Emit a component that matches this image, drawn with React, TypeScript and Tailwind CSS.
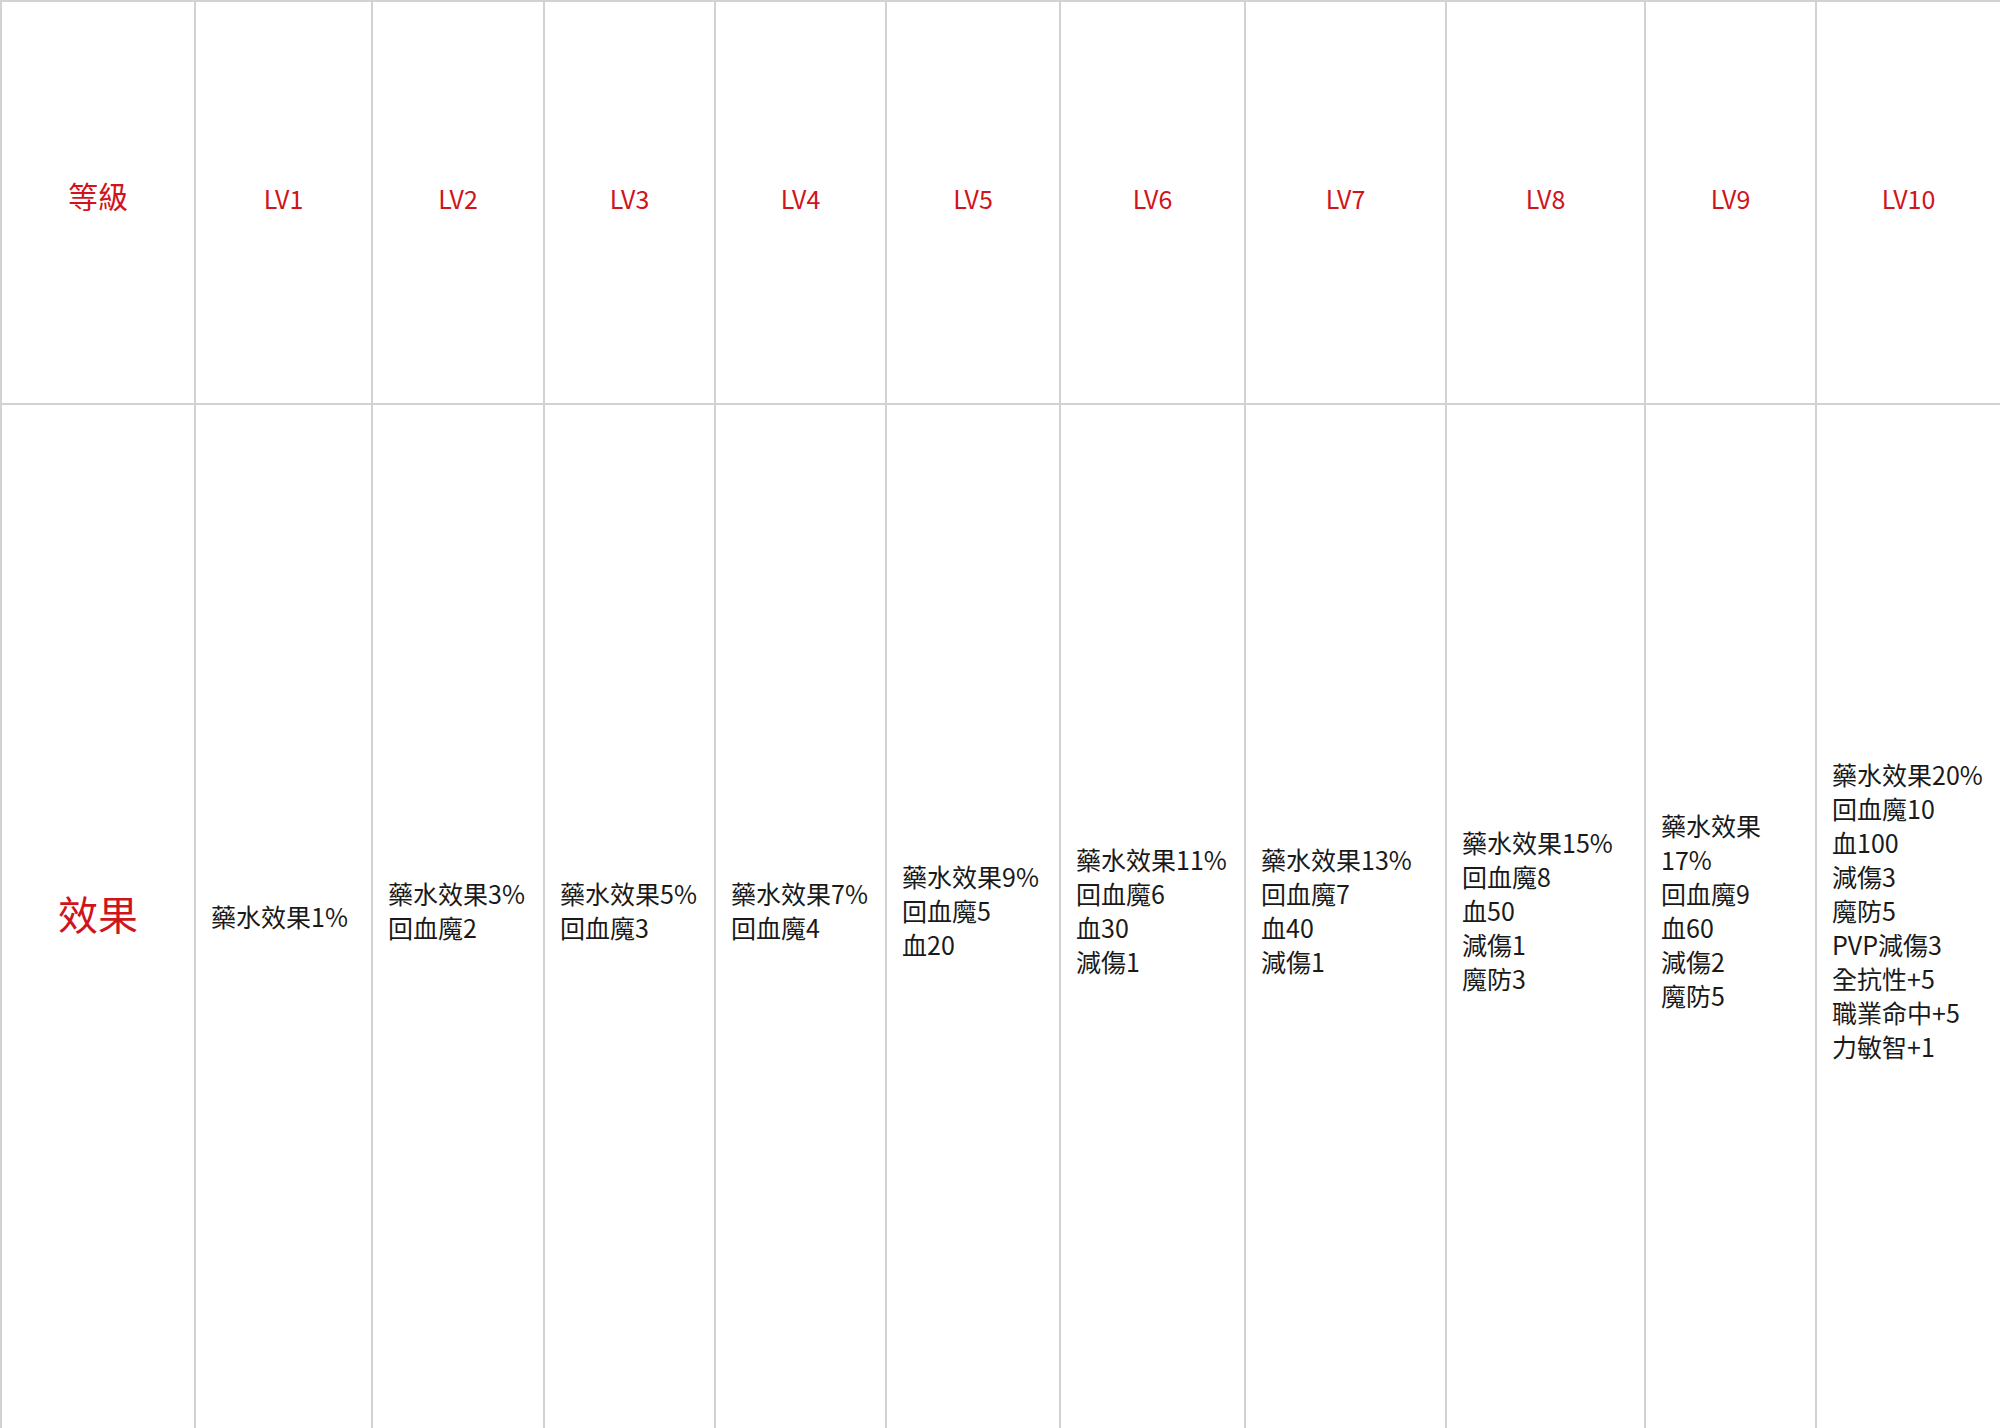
import React from "react";

const levels: { name: string; lines: string[]; pad: string }[] = [
  { name: "LV1", lines: ["藥水效果1%"], pad: "pb-[1px]" },
  { name: "LV2", lines: ["藥水效果3%", "回血魔2"], pad: "pb-[13px]" },
  { name: "LV3", lines: ["藥水效果5%", "回血魔3"], pad: "pb-[13px]" },
  { name: "LV4", lines: ["藥水效果7%", "回血魔4"], pad: "pb-[13px]" },
  { name: "LV5", lines: ["藥水效果9%", "回血魔5", "血20"], pad: "pb-[13px]" },
  { name: "LV6", lines: ["藥水效果11%", "回血魔6", "血30", "減傷1"], pad: "pb-[13px]" },
  { name: "LV7", lines: ["藥水效果13%", "回血魔7", "血40", "減傷1"], pad: "pb-[13px]" },
  { name: "LV8", lines: ["藥水效果15%", "回血魔8", "血50", "減傷1", "魔防3"], pad: "pb-[13px]" },
  { name: "LV9", lines: ["藥水效果", "17%", "回血魔9", "血60", "減傷2", "魔防5"], pad: "pb-[13px]" },
  {
    name: "LV10",
    lines: ["藥水效果20%", "回血魔10", "血100", "減傷3", "魔防5", "PVP減傷3", "全抗性+5", "職業命中+5", "力敏智+1"],
    pad: "pb-[13px]",
  },
];

export default function App() {
  return (
    <div
      className="w-[2000px] h-[1428px] bg-white overflow-hidden"
      style={{ fontFamily: '"Noto Sans CJK TC", "Noto Sans", sans-serif' }}
    >
      <div className="grid grid-cols-[194px_177px_172px_171px_171px_174px_185px_201px_199px_171px_185px] grid-rows-[403px_1025px] border-t-2 border-[#d2d2d2]">
        <div className="flex items-center justify-center border-l-2 border-b-2 border-[#d2d2d2] text-[30px] text-[#cf141c] pb-[14px]">
          等級
        </div>
        {levels.map((l) => (
          <div
            key={l.name}
            className="flex items-center justify-center border-l-2 border-b-2 border-[#d2d2d2] text-[25px] text-[#cf141c] pb-[8px]"
          >
            {l.name}
          </div>
        ))}
        <div className="flex items-center justify-center border-l-2 border-b-2 border-[#d2d2d2] text-[40px] text-[#cf141c] pb-[8px]">
          效果
        </div>
        {levels.map((l) => (
          <div
            key={l.name + "b"}
            className={`flex flex-col justify-center border-l-2 border-b-2 border-[#d2d2d2] pl-[15px] text-[25px] leading-[34px] text-[#1a1a1a] ${l.pad}`}
          >
            {l.lines.map((t, i) => (
              <div key={i} className="whitespace-nowrap">
                {t}
              </div>
            ))}
          </div>
        ))}
      </div>
    </div>
  );
}
